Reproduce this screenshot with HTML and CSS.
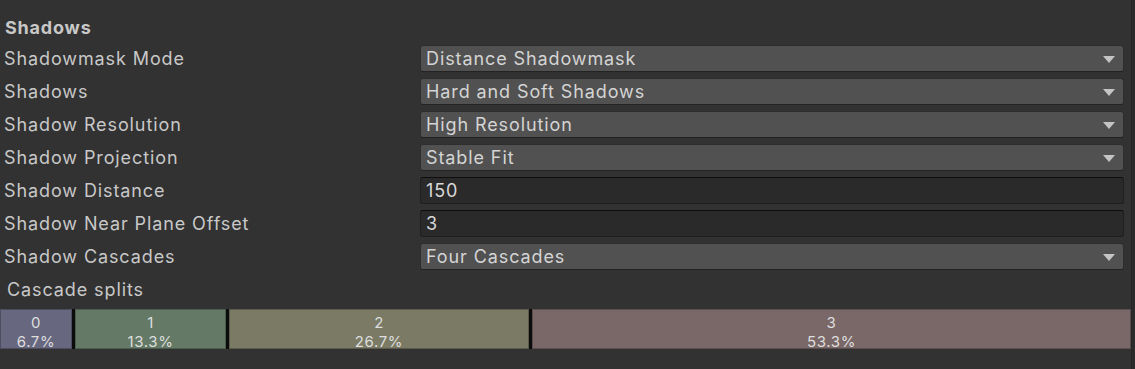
FILE: index.html
```html
<!DOCTYPE html>
<html lang="en">
<head>
    <meta charset="UTF-8" />
    <title>Shadows</title>
    <link rel="stylesheet" href="styles.css">
</head>
<body>
    <div class="inspector">
        <div class="section-title">Shadows</div>

        <div class="row">
            <div class="label">Shadowmask Mode</div>
            <div class="field dropdown">Distance Shadowmask<span class="arrow"></span></div>
        </div>
        <div class="row">
            <div class="label">Shadows</div>
            <div class="field dropdown">Hard and Soft Shadows<span class="arrow"></span></div>
        </div>
        <div class="row">
            <div class="label">Shadow Resolution</div>
            <div class="field dropdown">High Resolution<span class="arrow"></span></div>
        </div>
        <div class="row">
            <div class="label">Shadow Projection</div>
            <div class="field dropdown">Stable Fit<span class="arrow"></span></div>
        </div>
        <div class="row">
            <div class="label">Shadow Distance</div>
            <div class="field text-input">150</div>
        </div>
        <div class="row">
            <div class="label">Shadow Near Plane Offset</div>
            <div class="field text-input">3</div>
        </div>
        <div class="row">
            <div class="label">Shadow Cascades</div>
            <div class="field dropdown">Four Cascades<span class="arrow"></span></div>
        </div>

        <div class="splits-label">Cascade splits</div>

        <div class="splits">
            <div class="split c0" style="width: 72px">0<br>6.7%</div>
            <div class="divider"></div>
            <div class="split c1" style="width: 151px">1<br>13.3%</div>
            <div class="divider"></div>
            <div class="split c2" style="width: 300px">2<br>26.7%</div>
            <div class="divider"></div>
            <div class="split c3">3<br>53.3%</div>
        </div>
    </div>
    <div class="edge"></div>
</body>
</html>
```

FILE: styles.css
```css
* {
    box-sizing: border-box;
}

body {
    margin: 0;
    height: 369px;
    background: #323232;
    font-family: Inter, 'Noto Sans', sans-serif;
    color: #c8c8c8;
    display: flex;
    overflow: hidden;
}

.inspector {
    flex: 1;
    padding-top: 12px;
}

.edge {
    width: 4px;
    background: #2c2c2c;
    border-left: 1px solid #262626;
}

.section-title {
    height: 30px;
    line-height: 32px;
    padding-left: 5px;
    font-size: 18px;
    font-weight: 700;
    letter-spacing: 0.8px;
}

.row {
    display: flex;
    align-items: center;
    height: 33px;
    padding-right: 7px;
}

.label {
    width: 420px;
    padding-left: 4px;
    font-size: 18px;
    letter-spacing: 0.9px;
}

.field {
    flex: 1;
    height: 27px;
    border-radius: 3px;
    padding-left: 5px;
    font-size: 18px;
    letter-spacing: 0.9px;
    line-height: 25px;
    color: #d4d4d4;
    position: relative;
}

.dropdown {
    background: #515151;
    border: 1px solid #2e2e2e;
    border-bottom-color: #232323;
}

.text-input {
    background: #2a2a2a;
    border: 1px solid #1e1e1e;
    border-top-color: #0e0e0e;
    color: #d8d8d8;
}

.arrow {
    position: absolute;
    right: 8px;
    top: 10px;
    width: 0;
    height: 0;
    border-left: 6px solid transparent;
    border-right: 6px solid transparent;
    border-top: 7px solid #c4c4c4;
}

.splits-label {
    height: 36px;
    line-height: 34px;
    padding-left: 7px;
    font-size: 18px;
    letter-spacing: 0.9px;
}

.splits {
    display: flex;
    height: 40px;
}

.divider {
    width: 3px;
    background: #0c0c0c;
}

.split {
    height: 40px;
    overflow: hidden;
    text-align: center;
    font-size: 15px;
    letter-spacing: 0.6px;
    line-height: 19px;
    padding-top: 3px;
    color: #dedede;
    border: 1px solid rgba(0, 0, 0, 0.25);
}

.c0 {
    background: #67677f;
}

.c1 {
    background: #647a66;
}

.c2 {
    background: #7a7a65;
}

.c3 {
    flex: 1;
    background: #7a6868;
}
```
